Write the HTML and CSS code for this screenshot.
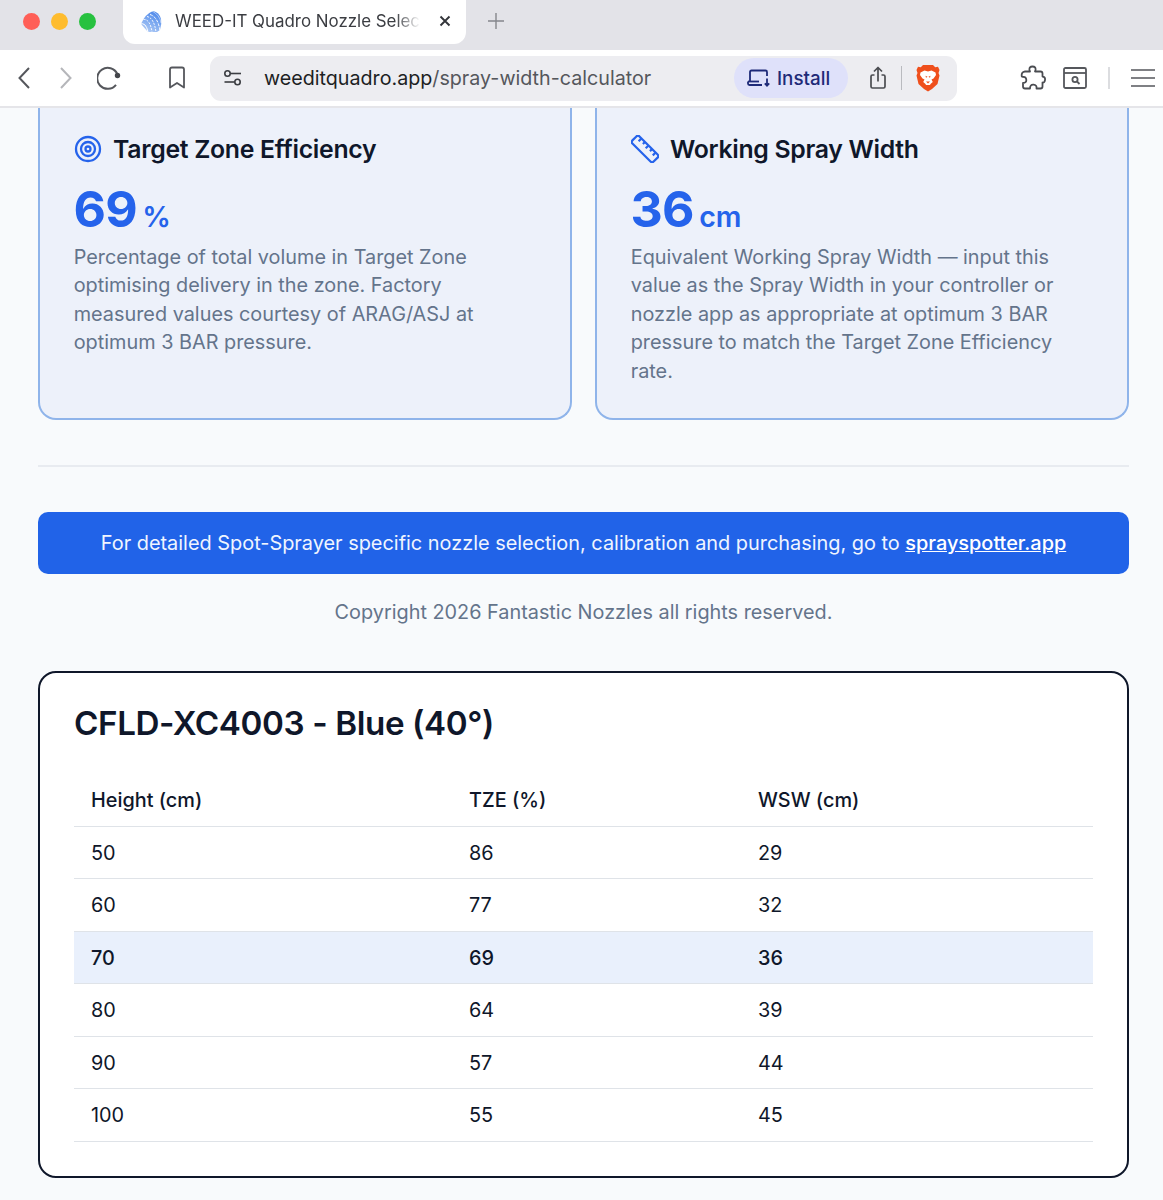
FILE: index.html
```html
<!DOCTYPE html>
<html lang="en">
<head>
<meta charset="utf-8">
<title>WEED-IT Quadro Nozzle Selector</title>
<link rel="stylesheet" href="styles.css">
</head>
<body>
<div class="tabstrip">
  <div class="lights"><span class="light red"></span><span class="light yellow"></span><span class="light green"></span></div>
  <div class="tab">
    <svg class="favicon" viewBox="0 0 24 24" width="24" height="24">
      <defs><linearGradient id="fav" x1="0.7" y1="0" x2="0.2" y2="1"><stop offset="0" stop-color="#4a86ea"/><stop offset="0.5" stop-color="#7eaaf0"/><stop offset="1" stop-color="#b4cef6"/></linearGradient></defs>
      <path d="M14 2Q20 3 22 10 23 15 21 21L18 23H9L2 15Q6 5 14 2Z" fill="url(#fav)"/>
      <g fill="none" stroke="#fff" stroke-width="1"><path d="M1 15Q7 13 9 23"/><path d="M4.500 10.500Q11 10 13 23" stroke-dasharray="2 1.200"/><path d="M8 7.500Q15 9 17 23" stroke-dasharray="2 1.200"/><path d="M11 5.500Q19 8 21 22" stroke-dasharray="3 1.200"/><path d="M13 2Q21 6 22 14" stroke-opacity=".5"/></g>
    </svg>
    <span class="tab-title">WEED-IT Quadro Nozzle Selec</span>
    <svg class="tab-close" viewBox="0 0 12 12" width="12" height="12"><path d="M1.500 1.500l9 9M10.500 1.500l-9 9" stroke="#33353a" stroke-width="1.900" fill="none"/></svg>
  </div>
  <svg class="newtab" viewBox="0 0 16 16" width="16" height="16"><path d="M8 0v16M0 8h16" stroke="#85878c" stroke-width="1.400" fill="none"/></svg>
</div>
<div class="toolbar">
  <svg class="tb back" viewBox="0 0 14 24" width="14" height="24"><path d="M12 2L2.500 12 12 22" fill="none" stroke="#55575c" stroke-width="2"/></svg>
  <svg class="tb forward" viewBox="0 0 14 24" width="14" height="24"><path d="M2 2l9.500 10L2 22" fill="none" stroke="#b5b6ba" stroke-width="2"/></svg>
  <svg class="tb reload" viewBox="0 0 24 24" width="24" height="24"><path d="M20.300 8A10.500 10.500 0 1 0 19 18.800" fill="none" stroke="#55575c" stroke-width="2"/><circle cx="20.500" cy="9.500" r="2.700" fill="#44464b"/></svg>
  <svg class="tb bookmark" viewBox="0 0 18 24" width="18" height="24"><path d="M2 3.500Q2 1.500 4 1.500H14Q16 1.500 16 3.500V21.500L9 17 2 21.500Z" fill="none" stroke="#55575c" stroke-width="1.800" stroke-linejoin="round"/></svg>
  <div class="omnibox">
    <svg class="tune" viewBox="0 0 20 18" width="20" height="18"><g fill="none" stroke="#3b3d42" stroke-width="1.600"><circle cx="4.500" cy="4.500" r="2.700"/><path d="M7.500 4.500H18"/><circle cx="14.500" cy="13" r="2.700"/><path d="M1.500 13H11.500"/></g></svg>
    <span class="url"><span class="host">weeditquadro.app</span>/spray-width-calculator</span>
    <div class="install">
      <svg viewBox="0 0 24 18" width="24" height="18"><g fill="none" stroke="#1e2a78" stroke-width="1.800"><path d="M3 13V3Q3 1.500 4.500 1.500H18.500Q20 1.500 20 3V7"/><path d="M1 12.500V14.500Q1 16 2.500 16H15"/><path d="M1 12.500H12"/><path d="M20 9.500V16.500M17.800 14.300l2.200 2.300 2.200-2.300"/></g></svg>
      <span>Install</span>
    </div>
    <svg class="share" viewBox="0 0 18 24" width="18" height="24"><g fill="none" stroke="#4a4c51" stroke-width="1.700" stroke-linejoin="round"><path d="M5.500 9H3.500Q2 9 2 10.500V20.500Q2 22 3.500 22H14.500Q16 22 16 20.500V10.500Q16 9 14.500 9H12.500"/><path d="M9 15.500V2M5 5.500L9 1.500l4 4"/></g></svg>
    <span class="omni-sep"></span>
    <svg class="brave" viewBox="0 0 24 28" width="24" height="28"><path d="M7 1h10l2.200 2.200 2.800-.5 1.500 3.300-1 3 1 2.500-2 8.500L16 25 12 27.500 8 25 2.500 20 .5 11.500l1-2.500-1-3L2 2.700l2.800.5z" fill="#ef4f1c"/><path d="M4.500 8.500L8.500 6.500 12 7.500 15.500 6.500 19.500 8.500 20 11 17.500 14.500 15.500 15.500 16.800 18 14.500 20 14 21H10L9.500 20 7.200 18 8.500 15.500 6.500 14.500 4 11Z" fill="#fff"/><path d="M9.500 11.800l2 1-1.500 1zM14.500 11.800l-2 1 1.500 1zM10 17.500h4l-2 2z" fill="#ef4f1c"/></svg>
  </div>
  <svg class="tb puzzle" viewBox="0 0 26 26" width="26" height="26"><path d="M9.500 5Q9 1.500 12.500 1.500T15.500 5L15 6.500H20.500Q22.500 6.500 22.500 8.500V11.500Q25.500 12 25 15T22.500 17.500V21.500Q22.500 23.500 20.500 23.500H16.500Q17 20 13.500 19.700T10 23.500H5Q3 23.500 3 21.500V18Q6.500 18 6.300 14.800T3 12L1.800 11.500Q1 7 5 6.500H10Z" fill="none" stroke="#4a4c51" stroke-width="1.800" stroke-linejoin="round"/></svg>
  <svg class="tb wallet" viewBox="0 0 24 22" width="24" height="22"><g fill="none" stroke="#55575c" stroke-width="1.800"><rect x="1" y="1" width="22" height="20" rx="1.500"/><path d="M1 6H23"/><circle cx="12" cy="12.500" r="2.600"/><path d="M14 14.500l2.500 2.500"/></g></svg>
  <span class="tb-sep"></span>
  <svg class="tb menu" viewBox="0 0 24 20" width="24" height="20"><path d="M0 2H24M0 10H24M0 18H24" stroke="#55575c" stroke-width="1.500"/></svg>
</div>
<main class="page">
  <section class="cards">
    <article class="card">
      <h2 class="card-title">
        <svg viewBox="0 0 28 28" width="28" height="28"><g fill="none" stroke="#2563eb" stroke-width="2.300"><circle cx="14" cy="14" r="12"/><circle cx="14" cy="14" r="7"/><circle cx="14" cy="14" r="2.500"/></g></svg>
        Target Zone Efficiency
      </h2>
      <p class="metric"><span class="metric-value">69</span> <span class="metric-unit">%</span></p>
      <p class="card-text">Percentage of total volume in Target Zone optimising delivery in the zone. Factory measured values courtesy of ARAG/ASJ at optimum 3 BAR pressure.</p>
    </article>
    <article class="card">
      <h2 class="card-title">
        <svg viewBox="0 0 28 28" width="28" height="28"><g fill="none" stroke="#2563eb" stroke-width="2.200" stroke-linejoin="round" transform="rotate(45 14 14)"><rect x="-1" y="9" width="30" height="10" rx="2.200"/><path d="M4 9v4M9 9v3M14 9v4M19 9v3M24 9v4"/></g></svg>
        Working Spray Width
      </h2>
      <p class="metric"><span class="metric-value">36</span> <span class="metric-unit">cm</span></p>
      <p class="card-text">Equivalent Working Spray Width — input this value as the Spray Width in your controller or nozzle app as appropriate at optimum 3 BAR pressure to match the Target Zone Efficiency rate.</p>
    </article>
  </section>
  <hr class="divider">
  <div class="banner">For detailed Spot-Sprayer specific nozzle selection, calibration and purchasing, go to <a href="#">sprayspotter.app</a></div>
  <p class="copyright">Copyright 2026 Fantastic Nozzles all rights reserved.</p>
  <section class="table-card">
    <h2 class="table-title">CFLD-XC4003 - Blue (40°)</h2>
    <table class="data">
      <thead><tr><th class="c1">Height (cm)</th><th class="c2">TZE (%)</th><th>WSW (cm)</th></tr></thead>
      <tbody>
        <tr><td>50</td><td>86</td><td>29</td></tr>
        <tr><td>60</td><td>77</td><td>32</td></tr>
        <tr class="active"><td>70</td><td>69</td><td>36</td></tr>
        <tr><td>80</td><td>64</td><td>39</td></tr>
        <tr><td>90</td><td>57</td><td>44</td></tr>
        <tr><td>100</td><td>55</td><td>45</td></tr>
      </tbody>
    </table>
  </section>
</main>
</body>
</html>
```
FILE: styles.css
```css
* { box-sizing: border-box; }
html, body { margin: 0; padding: 0; }
body { width: 1163px; height: 1200px; overflow: hidden; background: #f8fafc; font-family: Inter, "Liberation Sans", sans-serif; color: #0f172a; }
.tabstrip { height: 50px; background: #e3e3e8; display: flex; align-items: flex-start; padding-left: 23px; }
.lights { display: flex; gap: 11px; margin-top: 13px; }
.light { width: 17px; height: 17px; border-radius: 50%; }
.red { background: #ff5f57; }
.yellow { background: #febc2e; }
.green { background: #27c13f; }
.tab { width: 343px; height: 44px; margin-left: 27px; background: #fff; border-radius: 0 0 12px 12px; display: flex; align-items: center; padding: 0 15px 2px 16px; }
.favicon { flex: none; }
.tab-title { margin-left: 12px; flex: none; white-space: nowrap; font-size: 16.900px; color: #3b3d42; -webkit-mask-image: linear-gradient(to right, #000 90%, transparent); mask-image: linear-gradient(to right, #000 90%, transparent); }
.tab-close { margin-left: auto; flex: none; }
.newtab { margin: 13px 0 0 22px; }
.toolbar { height: 58px; background: #fff; border-bottom: 2px solid #e5e5e9; display: flex; align-items: center; position: relative; padding-left: 17px; }
.tb { flex: none; }
.forward { margin-left: 28px; }
.reload { margin-left: 24px; }
.bookmark { margin-left: 47px; }
.omnibox { width: 747px; height: 45px; margin-left: 24px; background: #ededf1; border-radius: 11px; display: flex; align-items: center; padding-left: 13px; }
.tune { flex: none; }
.url { margin-left: 21px; width: 470px; font-size: 19.700px; color: #55575c; white-space: nowrap; }
.host { color: #1d1f24; }
.install { width: 114px; height: 40px; border-radius: 20px; background: #dfe1fa; display: flex; align-items: center; gap: 6px; padding-left: 13px; color: #1e2a78; font-size: 18.800px; font-weight: 500; }
.share { margin-left: 21px; }
.omni-sep { width: 1px; height: 24px; background: #b9babf; margin-left: 14px; }
.brave { margin-left: 14px; }
.puzzle { margin-left: 63px; }
.wallet { margin-left: 17px; }
.tb-sep { width: 2px; height: 22px; background: #dcdde0; margin-left: 21px; }
.menu { margin-left: 21px; }
.page { padding: 0 34px 0 38px; }
.cards { display: grid; grid-template-columns: 534px 534px; gap: 23px; }
.card { height: 312px; background: #edf1fa; border: 2px solid #8fb4ea; border-top: 0; border-radius: 0 0 18px 18px; padding: 25px 34px 0; }
.card-title { margin: 0; display: flex; align-items: center; gap: 11px; font-size: 24.800px; line-height: 32px; font-weight: 600; letter-spacing: -0.300px; color: #0f172a; }
.metric { margin: 14px 0 0 -0.500px; line-height: 60px; height: 60px; color: #2563eb; }
.metric-value { font-size: 50px; font-weight: 700; letter-spacing: -0.800px; }
.metric-unit { font-size: 28.500px; font-weight: 600; margin-left: 1px; }
.card-text { margin: 3.800px 0 0 -0.300px; font-size: 19.850px; line-height: 28.500px; color: #64748b; }
.divider { border: 0; height: 2px; background: #e8ebf0; margin: 45px 0 0; }
.banner { margin-top: 45px; height: 62px; background: #2163e8; border-radius: 10px; color: #f0f5ff; font-size: 19.900px; display: flex; align-items: center; justify-content: center; gap: 0.28em; }
.banner a { color: #fff; font-weight: 500; text-decoration: underline; }
.copyright { margin: 24px 0 0; text-align: center; font-size: 19.850px; line-height: 28px; color: #64748b; }
.table-card { margin-top: 45px; height: 507px; border: 2px solid #0f172a; border-radius: 18px; background: #fff; padding: 29px 34px 0; }
.table-title { margin: 0; font-size: 33.200px; line-height: 42px; font-weight: 600; letter-spacing: -0.400px; }
.data { width: 100%; border-collapse: collapse; margin-top: 30px; font-size: 19.850px; }
.data th { text-align: left; font-weight: 500; height: 52px; padding: 0 17px; border-bottom: 1px solid #dfe3e8; }
.data td { height: 52.500px; padding: 1px 17px 0; border-bottom: 1px solid #dfe3e8; }
.c1 { width: 378px; }
.c2 { width: 289px; }
.active td { background: #e9f0fc; font-weight: 500; }
```
